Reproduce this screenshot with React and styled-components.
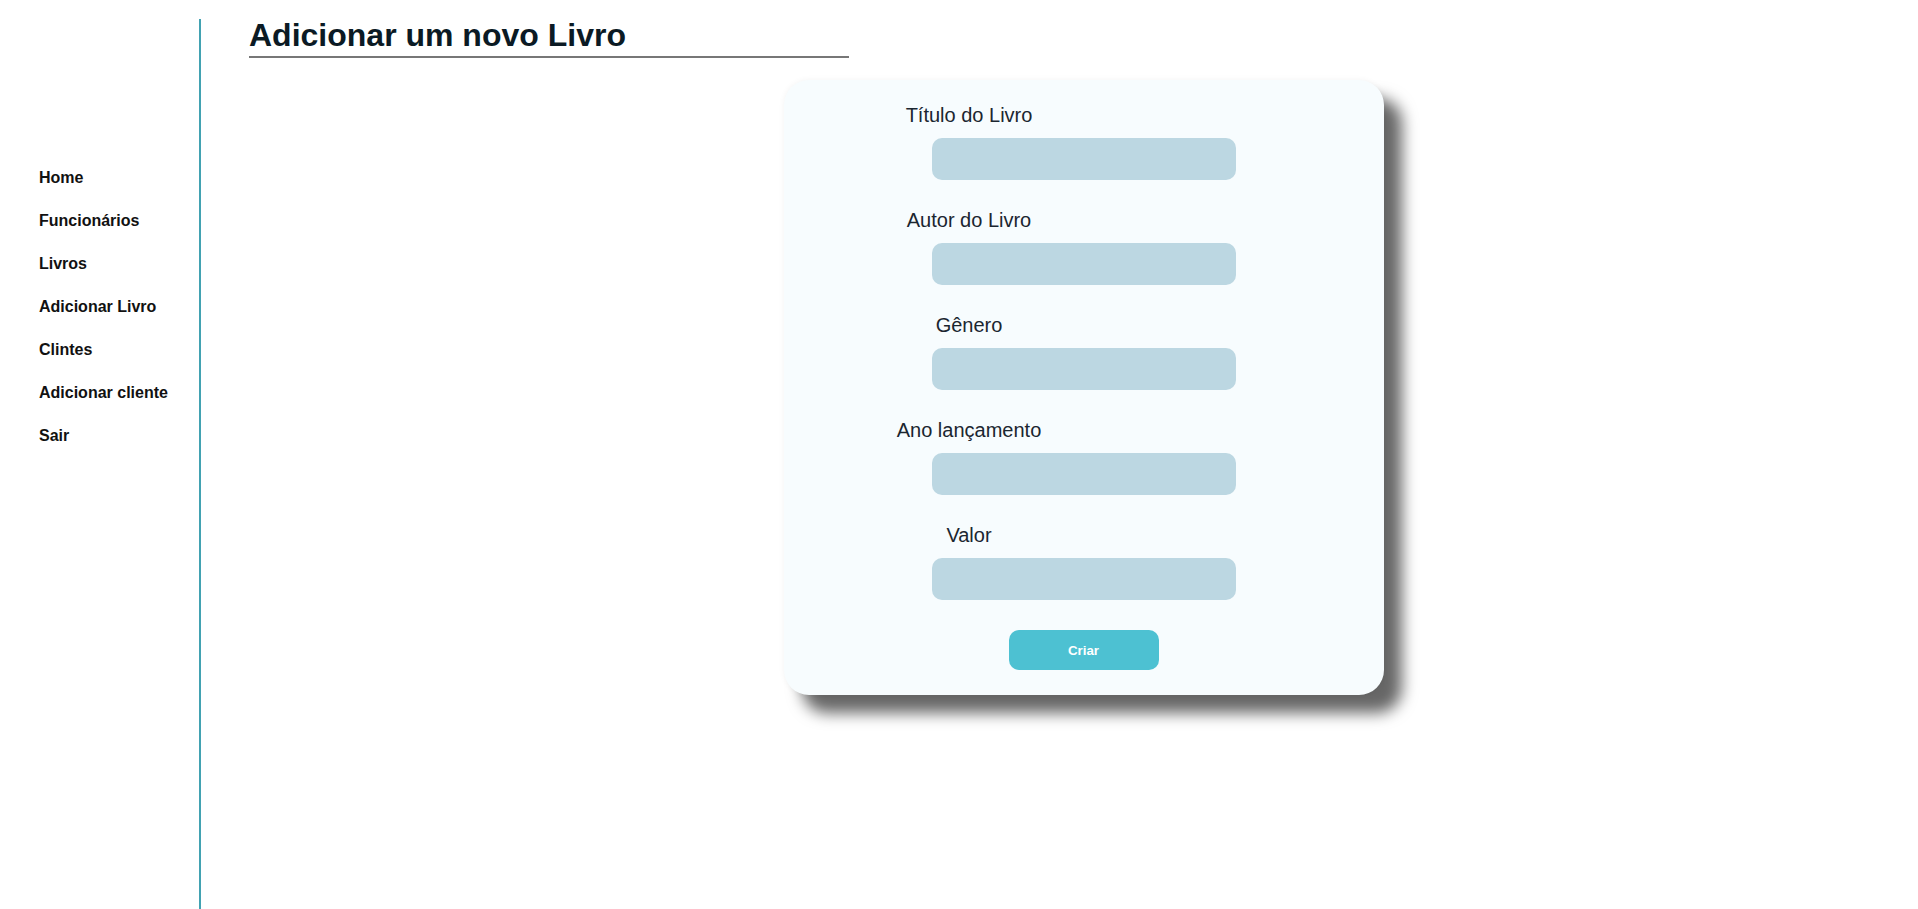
import React from "react";
import styled, { createGlobalStyle } from "styled-components";

const GlobalStyle = createGlobalStyle`
  body {
    margin: 0;
    background: #fff;
    font-family: "Liberation Sans", Arial, sans-serif;
  }
`;

const links = [
  "Home",
  "Funcionários",
  "Livros",
  "Adicionar Livro",
  "Clintes",
  "Adicionar cliente",
  "Sair",
];

const fields = ["Título do Livro", "Autor do Livro", "Gênero", "Ano lançamento", "Valor"];

const App = () => {
  return (
    <React.Fragment>
      <GlobalStyle />
      <Page>
        <Sidebar>
          {links.map((item) => (
            <NavLink key={item} href="#">
              {item}
            </NavLink>
          ))}
        </Sidebar>
        <Main>
          <Title>Adicionar um novo Livro</Title>
          <Card>
            {fields.map((label) => (
              <Field key={label}>
                <Label>{label}</Label>
                <Input type="text" />
              </Field>
            ))}
            <Button type="button">Criar</Button>
          </Card>
        </Main>
      </Page>
    </React.Fragment>
  );
};

const Page = styled.div`
  display: flex;
  min-height: 100vh;
`;

const Sidebar = styled.nav`
  display: flex;
  flex-direction: column;
  box-sizing: border-box;
  width: 201px;
  margin-top: 19px;
  padding: 137px 0 0 39px;
  border-right: 2px solid #42a2b2;
`;

const NavLink = styled.a`
  display: block;
  height: 43px;
  line-height: 43px;
  font-size: 16px;
  font-weight: bold;
  color: #111;
  text-decoration: none;
`;

const Main = styled.main`
  flex: 1;
  padding-left: 48px;
`;

const Title = styled.h1`
  width: 600px;
  margin: 17px 0 0;
  padding-bottom: 2px;
  font-size: 32px;
  line-height: 37px;
  color: #0b1a24;
  border-bottom: 2px solid #777;
`;

const Card = styled.form`
  display: flex;
  flex-direction: column;
  align-items: center;
  width: 600px;
  box-sizing: border-box;
  margin: 22px auto 0;
  padding: 24px 0 25px;
  border-radius: 25px;
  background: #f7fcfe;
  box-shadow: 18px 18px 15px rgba(0, 0, 0, 0.6), 0 0 6px rgba(0, 0, 0, 0.05);
`;

const Field = styled.div`
  display: flex;
  flex-direction: column;
  align-items: center;
  width: 100%;
  margin-bottom: 29px;

  &:nth-of-type(5) {
    margin-bottom: 30px;
  }
`;

const Label = styled.label`
  align-self: flex-start;
  width: 371px;
  margin-bottom: 11px;
  font-size: 20px;
  line-height: 23px;
  text-align: center;
  color: #1b2630;
`;

const Input = styled.input`
  box-sizing: border-box;
  width: 304px;
  height: 42px;
  border: none;
  border-radius: 10px;
  background: #bcd7e2;

  &:focus {
    outline: none;
  }
`;

const Button = styled.button`
  width: 150px;
  height: 40px;
  border: none;
  border-radius: 10px;
  background: #4dc1d2;
  color: #fff;
  font-family: "Liberation Sans", Arial, sans-serif;
  font-size: 13.33px;
  font-weight: bold;
  cursor: pointer;
`;

export default App;
